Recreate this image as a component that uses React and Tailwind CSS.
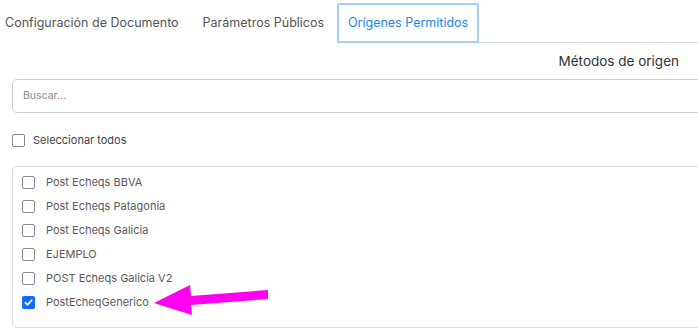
import React from "react";

const metodos = [
  { name: "Post Echeqs BBVA", checked: false },
  { name: "Post Echeqs Patagonia", checked: false },
  { name: "Post Echeqs Galicia", checked: false },
  { name: "EJEMPLO", checked: false },
  { name: "POST Echeqs Galicia V2", checked: false },
  { name: "PostEcheqGenerico", checked: true },
];

function Box({ checked }) {
  return checked ? (
    <span className="flex h-[13px] w-[13px] shrink-0 items-center justify-center rounded-[2px] bg-[#0d6efd]">
      <svg width="9" height="9" viewBox="0 0 10 10" fill="none">
        <path d="M1.5 5.2 L4 7.6 L8.6 2.4" stroke="white" strokeWidth="1.9" strokeLinecap="round" strokeLinejoin="round" />
      </svg>
    </span>
  ) : (
    <span className="block h-[13px] w-[13px] shrink-0 rounded-[2px] border border-[#8a8a8a] bg-white" />
  );
}

export default function App() {
  return (
    <div
      className="relative h-[335px] w-[698px] overflow-hidden bg-white"
      style={{ fontFamily: "Inter, 'Noto Sans', sans-serif" }}
    >
      {/* Tabs */}
      <div className="flex h-[43px] items-stretch pt-[3px]">
        <div className="flex items-center pl-[5px] pr-[12px] text-[12.5px] text-[#555]">Configuración de Documento</div>
        <div className="flex items-center pl-[12px] pr-[13px] text-[12.5px] text-[#555]">Parámetros Públicos</div>
        <div className="flex w-[142px] items-center justify-center rounded-t-[2px] border-2 border-[#a6d1f7] text-[12.5px] text-[#1a88e8]">
          Orígenes Permitidos
        </div>
        <div className="flex-1 border-b border-[#dde2e6]" />
      </div>

      {/* Header */}
      <div className="flex h-[36px] items-center justify-end pr-[19px] text-[13.5px] text-[#333]">
        Métodos de origen
      </div>

      {/* Search */}
      <div className="pl-[12px]">
        <div className="flex h-[34px] w-[720px] items-center rounded-[5px] border border-[#cfcfcf] pl-[10px] text-[10.5px] text-[#8a8a8a]">
          Buscar...
        </div>
      </div>

      {/* Select all */}
      <div className="mt-[19px] flex items-center gap-[8px] pl-[12px] text-[11px] text-[#444]">
        <Box checked={false} />
        <span>Seleccionar todos</span>
      </div>

      {/* List */}
      <div className="mt-[17px] pl-[12px]">
        <div className="flex h-[162px] w-[720px] flex-col rounded-[5px] border border-[#e0e0e0] pl-[9px] pt-[4px]">
          {metodos.map((m) => (
            <div key={m.name} className="flex h-[24px] items-center gap-[11px] text-[11px] text-[#5a5a5a]">
              <Box checked={m.checked} />
              <span>{m.name}</span>
            </div>
          ))}
        </div>
      </div>

      {/* Annotation arrow */}
      <svg className="pointer-events-none absolute left-0 top-0" width="698" height="335">
        <polygon
          points="154,303 190,285 191,296 268,290 268,299 191,305 192,315"
          fill="#ff00f0"
        />
      </svg>
    </div>
  );
}
